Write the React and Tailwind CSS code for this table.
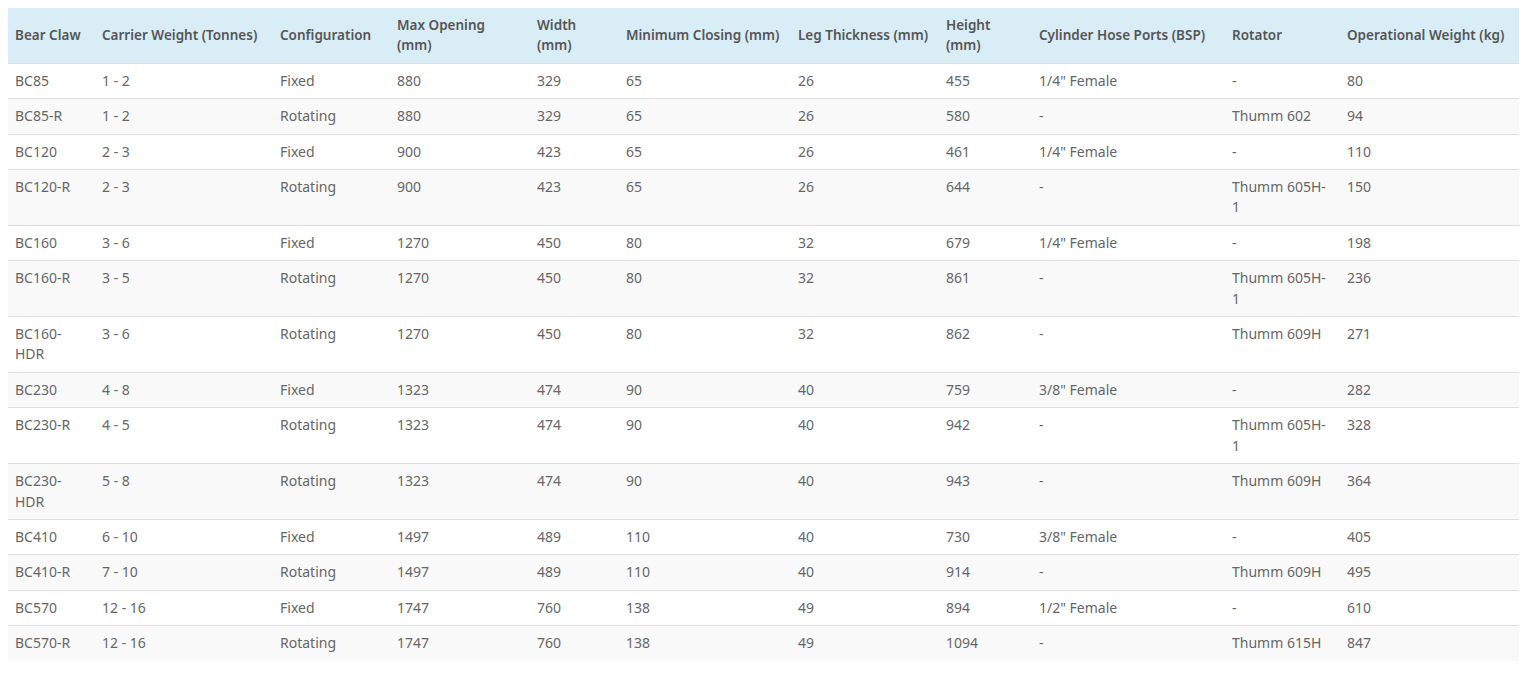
const columns = [
  { label: "Bear Claw", w: "w-[87px]", one: true },
  { label: "Carrier Weight (Tonnes)", w: "w-[178px]", one: true },
  { label: "Configuration", w: "w-[117px]", one: true },
  { label: "Max Opening (mm)", w: "w-[140px]" },
  { label: "Width (mm)", w: "w-[89px]" },
  { label: "Minimum Closing (mm)", w: "w-[172px]", one: true },
  { label: "Leg Thickness (mm)", w: "w-[148px]", one: true },
  { label: "Height (mm)", w: "w-[93px]" },
  { label: "Cylinder Hose Ports (BSP)", w: "w-[193px]", one: true },
  { label: "Rotator", w: "w-[115px]", one: true },
  { label: "Operational Weight (kg)", w: "w-[179px]", one: true },
];

const rows = [
  ["BC85", "1 - 2", "Fixed", "880", "329", "65", "26", "455", "1/4\" Female", "-", "80"],
  ["BC85-R", "1 - 2", "Rotating", "880", "329", "65", "26", "580", "-", "Thumm 602", "94"],
  ["BC120", "2 - 3", "Fixed", "900", "423", "65", "26", "461", "1/4\" Female", "-", "110"],
  ["BC120-R", "2 - 3", "Rotating", "900", "423", "65", "26", "644", "-", "Thumm 605H-1", "150"],
  ["BC160", "3 - 6", "Fixed", "1270", "450", "80", "32", "679", "1/4\" Female", "-", "198"],
  ["BC160-R", "3 - 5", "Rotating", "1270", "450", "80", "32", "861", "-", "Thumm 605H-1", "236"],
  ["BC160-HDR", "3 - 6", "Rotating", "1270", "450", "80", "32", "862", "-", "Thumm 609H", "271"],
  ["BC230", "4 - 8", "Fixed", "1323", "474", "90", "40", "759", "3/8\" Female", "-", "282"],
  ["BC230-R", "4 - 5", "Rotating", "1323", "474", "90", "40", "942", "-", "Thumm 605H-1", "328"],
  ["BC230-HDR", "5 - 8", "Rotating", "1323", "474", "90", "40", "943", "-", "Thumm 609H", "364"],
  ["BC410", "6 - 10", "Fixed", "1497", "489", "110", "40", "730", "3/8\" Female", "-", "405"],
  ["BC410-R", "7 - 10", "Rotating", "1497", "489", "110", "40", "914", "-", "Thumm 609H", "495"],
  ["BC570", "12 - 16", "Fixed", "1747", "760", "138", "49", "894", "1/2\" Female", "-", "610"],
  ["BC570-R", "12 - 16", "Rotating", "1747", "760", "138", "49", "1094", "-", "Thumm 615H", "847"],
];

export default function App() {
  return (
    <div className="bg-white min-h-[676px] pt-2 pl-2 font-['Noto_Sans',sans-serif]">
      <table className="table-fixed w-[1511px] border-collapse text-[14px] leading-[20.4px]">
        <colgroup>
          {columns.map((c) => (
            <col key={c.label} className={c.w} />
          ))}
        </colgroup>
        <thead>
          <tr className="bg-[#d9edf7]">
            {columns.map((c) => (
              <th
                key={c.label}
                className={`px-[7px] py-[7px] text-left align-middle text-[13.5px] font-semibold text-[#555] ${
                  c.one ? "whitespace-nowrap" : ""
                }`}
              >
                {c.label}
              </th>
            ))}
          </tr>
        </thead>
        <tbody>
          {rows.map((r, i) => (
            <tr
              key={r[0]}
              className={i % 2 === 0 ? "bg-white" : "bg-[#f9f9f9]"}
            >
              {r.map((v, j) => (
                <td
                  key={j}
                  className="border-t border-[#ddd] px-[7px] py-[7px] align-top text-[#666] break-words"
                >
                  {v}
                </td>
              ))}
            </tr>
          ))}
        </tbody>
      </table>
    </div>
  );
}
